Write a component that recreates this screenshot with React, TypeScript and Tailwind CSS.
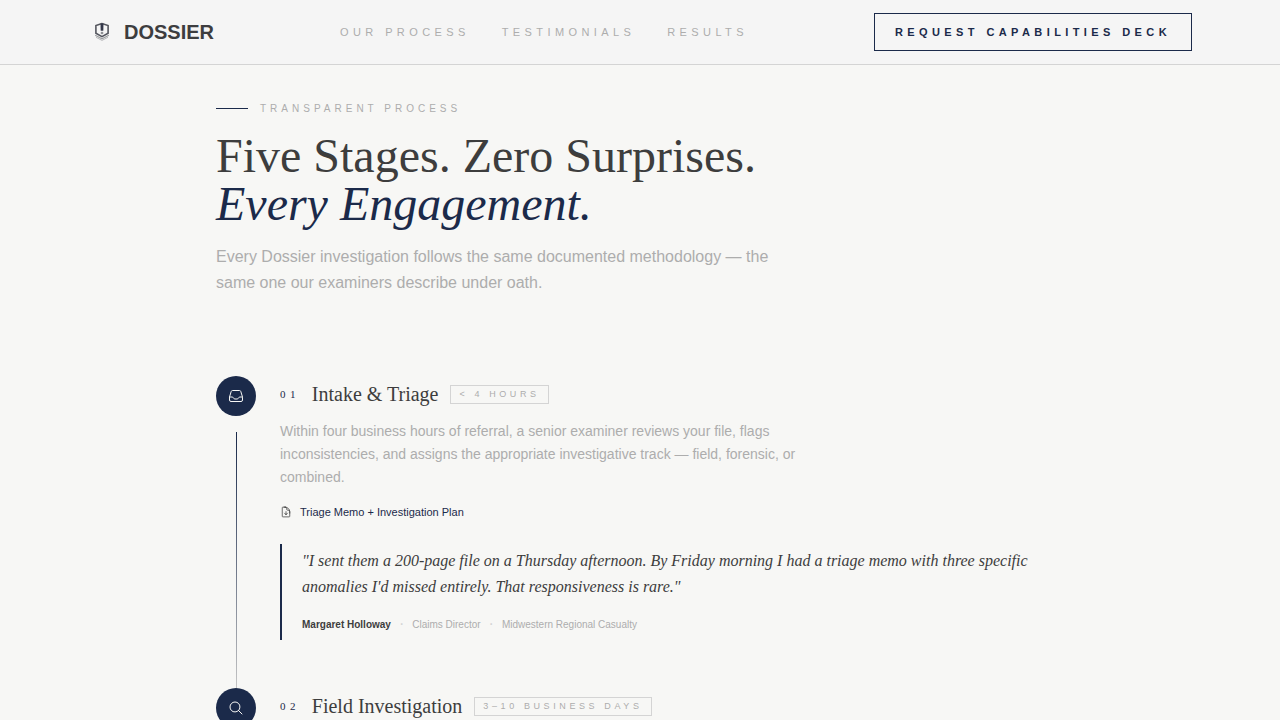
import type { ReactNode } from 'react';
import {
  HiOutlineDocumentArrowDown,
  HiOutlineInbox,
  HiOutlineMagnifyingGlass,
} from 'react-icons/hi2';

interface Quote {
  text: string;
  name: string;
  role: string;
  company: string;
}

interface Stage {
  number: string;
  title: string;
  duration: string;
  icon: ReactNode;
  description?: string;
  deliverable?: string;
  quote?: Quote;
}

const navLinks = [
  { label: 'OUR PROCESS', href: '#process' },
  { label: 'TESTIMONIALS', href: '#testimonials' },
  { label: 'RESULTS', href: '#results' },
];

const stages: Stage[] = [
  {
    number: '01',
    title: 'Intake & Triage',
    duration: '< 4 HOURS',
    icon: <HiOutlineInbox className="w-4 h-4" />,
    description:
      'Within four business hours of referral, a senior examiner reviews your file, flags inconsistencies, and assigns the appropriate investigative track — field, forensic, or combined.',
    deliverable: 'Triage Memo + Investigation Plan',
    quote: {
      text: "\"I sent them a 200-page file on a Thursday afternoon. By Friday morning I had a triage memo with three specific anomalies I'd missed entirely. That responsiveness is rare.\"",
      name: 'Margaret Holloway',
      role: 'Claims Director',
      company: 'Midwestern Regional Casualty',
    },
  },
  {
    number: '02',
    title: 'Field Investigation',
    duration: '3–10 BUSINESS DAYS',
    icon: <HiOutlineMagnifyingGlass className="w-4 h-4" />,
  },
];

function Logo() {
  return (
    <svg viewBox="0 0 28 28" className="w-7 h-7" fill="none" aria-hidden="true">
      <path d="M14 5.6 7.9 7.6v7.6l6.1 3.4 6.1-3.4V7.6z" stroke="#55575f" strokeWidth="1.6" />
      <path d="M12.5 5.4h3l-.2 7.4h-2.6z" fill="#34384a" />
      <path d="m14 13.6 1.7 1.5-1.7 1.5-1.7-1.5z" fill="#85878c" />
      <path d="m7.2 17.3 6.8 3.5 6.8-3.5" stroke="#9b9da0" strokeWidth="1.1" />
      <path d="m8 19.3 6 3.1 6-3.1" stroke="#b8b9bb" strokeWidth="1" />
    </svg>
  );
}

function Header() {
  return (
    <header className="bg-[#f5f5f5] border-b border-[#d4d4d4]">
      <div className="max-w-6xl mx-auto px-6 h-16 flex items-center justify-between">
        <a href="#top" className="flex items-center gap-2 text-xl font-bold text-[#3d3d3f]">
          <Logo />
          DOSSIER
        </a>
        <nav className="flex items-center gap-8">
          {navLinks.map((link) => (
            <a key={link.href} href={link.href} className="text-[11px] tracking-[0.4em] text-[#adadad]">
              {link.label}
            </a>
          ))}
        </nav>
        <button
          type="button"
          className="border border-[#1b2a4a] px-5 py-2.5 text-[11px] leading-4 font-bold tracking-[0.4em] text-[#1b2a4a]"
        >
          REQUEST CAPABILITIES DECK
        </button>
      </div>
    </header>
  );
}

function Testimonial({ quote }: { quote: Quote }) {
  return (
    <figure className="mt-6 border-l-2 border-[#1b2a4a] pl-5 py-1">
      <blockquote className="font-['Liberation_Serif',serif] italic text-base leading-[26px] text-[#3d3d3d]">
        {quote.text}
      </blockquote>
      <figcaption className="mt-3 flex items-center gap-2 text-[#adadad]">
        <span className="text-[10px] font-bold text-[#3d3d3d]">{quote.name}</span>
        <span className="text-[#d4d4d4]">·</span>
        <span className="text-[10px]">{quote.role}</span>
        <span className="text-[#d4d4d4]">·</span>
        <span className="text-[10px]">{quote.company}</span>
      </figcaption>
    </figure>
  );
}

function StageItem({ stage, isLast }: { stage: Stage; isLast: boolean }) {
  return (
    <li className="flex gap-6">
      <div className="flex flex-col items-center">
        <div className="w-10 h-10 shrink-0 rounded-full bg-[#1b2a4a] text-[#f7f7f5] flex items-center justify-center">
          {stage.icon}
        </div>
        {!isLast && <div className="w-px flex-1 mt-4 bg-linear-to-b from-[#1b2a4a] to-[#c4c4c4]" />}
      </div>

      <div className={`flex-1 pt-1 ${isLast ? '' : 'pb-12'}`}>
        <div className="flex items-center gap-3">
          <span className="font-['Liberation_Serif',serif] text-[11px] tracking-[0.4em] text-[#1b2a4a]">
            {stage.number}
          </span>
          <h2 className="font-['Liberation_Serif',serif] text-xl leading-7 text-[#3d3d3d]">{stage.title}</h2>
          <span className="border border-[#d4d4d4] px-2 py-0.5 text-[9px] leading-[13px] tracking-[0.4em] text-[#adadad]">
            {stage.duration}
          </span>
        </div>
        {stage.description && (
          <p className="mt-3 max-w-xl text-sm leading-relaxed text-[#adadad]">{stage.description}</p>
        )}
        {stage.deliverable && (
          <div className="mt-4 flex items-center gap-2 text-[11px] leading-4 text-[#1b2a4a]">
            <HiOutlineDocumentArrowDown className="w-3 h-3 text-[#3d3d3d]" />
            {stage.deliverable}
          </div>
        )}
        {stage.quote && <Testimonial quote={stage.quote} />}
      </div>
    </li>
  );
}

export default function App() {
  return (
    <div id="top" className="min-h-screen bg-[#f7f7f5] font-['Liberation_Sans',sans-serif]">
      <Header />
      <main id="process" className="max-w-4xl mx-auto px-6 pt-9">
        <div className="flex items-center gap-3">
          <span className="w-8 h-px bg-[#1b2a4a]" />
          <span className="text-[10px] leading-[15px] tracking-[0.4em] text-[#adadad]">TRANSPARENT PROCESS</span>
        </div>
        <h1 className="mt-4 font-['Liberation_Serif',serif] text-5xl leading-none text-[#3d3d3d]">
          Five Stages. Zero Surprises.
          <br />
          <em className="text-[#1b2a4a]">Every Engagement.</em>
        </h1>
        <p className="mt-4 max-w-xl text-base leading-[26px] text-[#adadad]">
          Every Dossier investigation follows the same documented methodology — the same one our examiners describe
          under oath.
        </p>

        <ol className="mt-20">
          {stages.map((stage, i) => (
            <StageItem key={stage.number} stage={stage} isLast={i === stages.length - 1} />
          ))}
        </ol>
      </main>
    </div>
  );
}
